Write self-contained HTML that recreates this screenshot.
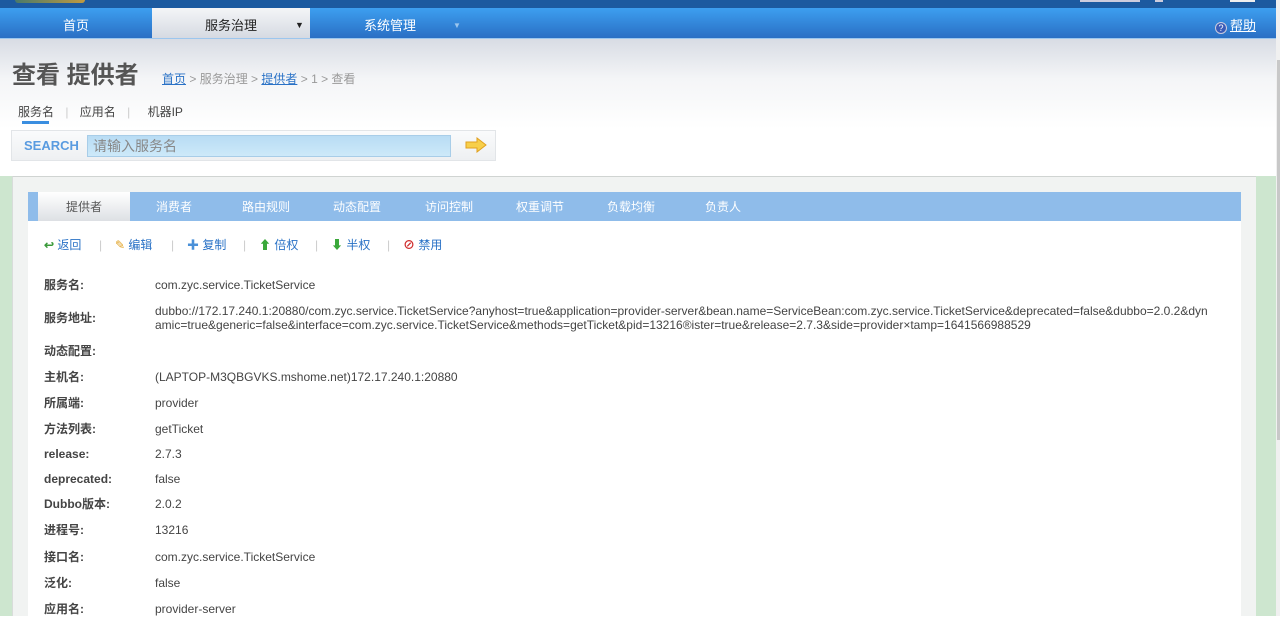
<!DOCTYPE html>
<html><head><meta charset="utf-8"><style>
*{margin:0;padding:0;box-sizing:border-box}
body{width:1280px;height:616px;overflow:hidden;position:relative;font-family:"Liberation Sans","Noto Sans CJK SC",sans-serif;font-size:12px;color:#333;background:#fff}
.a{position:absolute;white-space:nowrap}
.top{left:0;top:0;width:1276px;height:8px;background:#1c5aa0}
.nav{left:0;top:8px;width:1276px;height:31px;background:linear-gradient(#3d9ff0,#2a6fc4);border-bottom:1px solid #9cc6ee}
.nav .i{position:absolute;top:0;height:30px;line-height:35px;color:#fff;font-size:13px;text-align:center}
.hd{left:0;top:39px;width:1276px;height:137px;background:linear-gradient(#d8dce4,#f4f5f7 40px,#fff 90px)}
.panel{left:12px;top:176px;width:1244px;height:440px;background:#f1f3f2;border-top:1px solid #d0d4d2;border-left:1px solid #d8dcda}
.lab{left:44px;font-weight:bold;color:#444;font-size:12px;line-height:14px}
.val{left:155px;color:#444;font-size:12px;line-height:14px}
.act{top:237px;color:#2a72c6;font-size:12px;line-height:16px}
.sep{top:238px;color:#ccc}
</style></head><body>
<div class="a" style="left:0;top:0;width:12px;height:616px;background:#cde6cf"></div>
<div class="a" style="left:1256px;top:176px;width:20px;height:440px;background:#cde6cf"></div>
<div class="a" style="left:1276px;top:0;width:4px;height:616px;background:#f0f0f0"></div>
<div class="a" style="left:1277px;top:60px;width:3px;height:380px;background:#c8c8c8"></div>
<div class="a top"></div>
<div class="a" style="left:15px;top:0;width:70px;height:3px;border-radius:0 0 40px 40px;background:linear-gradient(90deg,#4a7a6a,#c09a40)"></div>
<div class="a" style="left:1080px;top:0;width:60px;height:2px;background:#ccd"></div>
<div class="a" style="left:1155px;top:0;width:8px;height:2px;background:#ccd"></div>
<div class="a" style="left:1230px;top:0;width:25px;height:2px;background:#eee"></div>
<div class="a nav">
 <div class="i" style="left:0;width:152px">首页</div>
 <div class="i" style="left:152px;width:158px;background:linear-gradient(#f4f5f7,#d6dae2);color:#222">服务治理<span style="position:absolute;left:143px;font-size:9px">▼</span></div>
 <div class="i" style="left:310px;width:160px">系统管理<span style="position:absolute;left:143px;font-size:8px;color:#9cc6ee">▼</span></div>
 <div class="i" style="left:1213px;width:45px;text-decoration:underline"><span style="display:inline-block;width:12px;height:12px;border-radius:50%;background:#3a5cb8;border:1px solid #ccd;font-size:9px;line-height:11px;vertical-align:-1px;margin-right:3px;text-decoration:none">?</span>帮助</div>
</div>
<div class="a hd"></div>
<div class="a" style="left:12px;top:55px;font-size:24px;font-weight:bold;color:#555">查看 提供者</div>
<div class="a" style="left:162px;top:70px;font-size:12px;color:#999"><u style="color:#2a72c6">首页</u> &gt; 服务治理 &gt; <u style="color:#2a72c6">提供者</u> &gt; 1 &gt; 查看</div>
<div class="a" style="left:18px;top:103px;font-size:12px;color:#444">服务名 <span style="color:#ccc;margin:0 8px">|</span> 应用名 <span style="color:#ccc;margin:0 14px 0 8px">|</span> 机器IP</div>
<div class="a" style="left:22px;top:121px;width:27px;height:3px;background:#3a8ee0"></div>
<div class="a" style="left:11px;top:130px;width:485px;height:31px;background:linear-gradient(#fafbfc,#eef0f2);border:1px solid #e2e5e8"></div>
<div class="a" style="left:24px;top:138px;font-size:13px;font-weight:bold;color:#5a9be0">SEARCH</div>
<div class="a" style="left:87px;top:135px;width:364px;height:22px;background:linear-gradient(#b8dcf4,#cde9f9);border:1px solid #a8cde8;color:#888;font-size:14px;line-height:20px;padding-left:5px">请输入服务名</div>
<div class="a" style="left:465px;top:137px;width:22px;height:16px"><svg width="22" height="16"><path d="M1 5h11V1l9 7-9 7v-4H1z" fill="#f7cf4a" stroke="#e0a020"/></svg></div>
<div class="a panel"></div>
<div class="a" style="left:28px;top:192px;width:1213px;height:430px;background:#fff"></div>
<div class="a" style="left:28px;top:192px;width:1213px;height:29px;background:#8fbcea;color:#fff;font-size:12px;line-height:30px">
 <span class="a" style="left:10px;top:0;width:92px;height:29px;background:linear-gradient(#fff,#dde0e4);color:#555;text-align:center">提供者</span>
 <span class="a" style="left:128px">消费者</span><span class="a" style="left:214px">路由规则</span><span class="a" style="left:305px">动态配置</span><span class="a" style="left:397px">访问控制</span><span class="a" style="left:488px">权重调节</span><span class="a" style="left:579px">负载均衡</span><span class="a" style="left:677px">负责人</span>
</div>
<div class="a act" style="left:44px"><b style="color:#3a9a3a">↩</b> 返回</div><div class="a sep" style="left:99px">|</div>
<div class="a act" style="left:115px"><span style="color:#e0a020">✎</span> 编辑</div><div class="a sep" style="left:171px">|</div>
<div class="a act" style="left:187px"><b style="color:#4a90d8">✚</b> 复制</div><div class="a sep" style="left:243px">|</div>
<div class="a act" style="left:259px"><b style="color:#3aa83a">⬆</b> 倍权</div><div class="a sep" style="left:315px">|</div>
<div class="a act" style="left:331px"><b style="color:#3aa83a">⬇</b> 半权</div><div class="a sep" style="left:387px">|</div>
<div class="a act" style="left:403px"><b style="color:#d03030">⊘</b> 禁用</div>

<div class="a lab" style="top:278px">服务名:</div><div class="a val" style="top:278px">com.zyc.service.TicketService</div>
<div class="a lab" style="top:311px">服务地址:</div><div class="a val" style="top:304px;line-height:14px">dubbo://172.17.240.1:20880/com.zyc.service.TicketService?anyhost=true&amp;application=provider-server&amp;bean.name=ServiceBean:com.zyc.service.TicketService&amp;deprecated=false&amp;dubbo=2.0.2&amp;dyn<br>amic=true&amp;generic=false&amp;interface=com.zyc.service.TicketService&amp;methods=getTicket&amp;pid=13216&reg;ister=true&amp;release=2.7.3&amp;side=provider&times;tamp=1641566988529</div>
<div class="a lab" style="top:344px">动态配置:</div>
<div class="a lab" style="top:370px">主机名:</div><div class="a val" style="top:370px">(LAPTOP-M3QBGVKS.mshome.net)172.17.240.1:20880</div>
<div class="a lab" style="top:396px">所属端:</div><div class="a val" style="top:396px">provider</div>
<div class="a lab" style="top:422px">方法列表:</div><div class="a val" style="top:422px">getTicket</div>
<div class="a lab" style="top:447px">release:</div><div class="a val" style="top:447px">2.7.3</div>
<div class="a lab" style="top:472px">deprecated:</div><div class="a val" style="top:472px">false</div>
<div class="a lab" style="top:497px">Dubbo版本:</div><div class="a val" style="top:497px">2.0.2</div>
<div class="a lab" style="top:523px">进程号:</div><div class="a val" style="top:523px">13216</div>
<div class="a lab" style="top:550px">接口名:</div><div class="a val" style="top:550px">com.zyc.service.TicketService</div>
<div class="a lab" style="top:576px">泛化:</div><div class="a val" style="top:576px">false</div>
<div class="a lab" style="top:602px">应用名:</div><div class="a val" style="top:602px">provider-server</div>
</body></html>
